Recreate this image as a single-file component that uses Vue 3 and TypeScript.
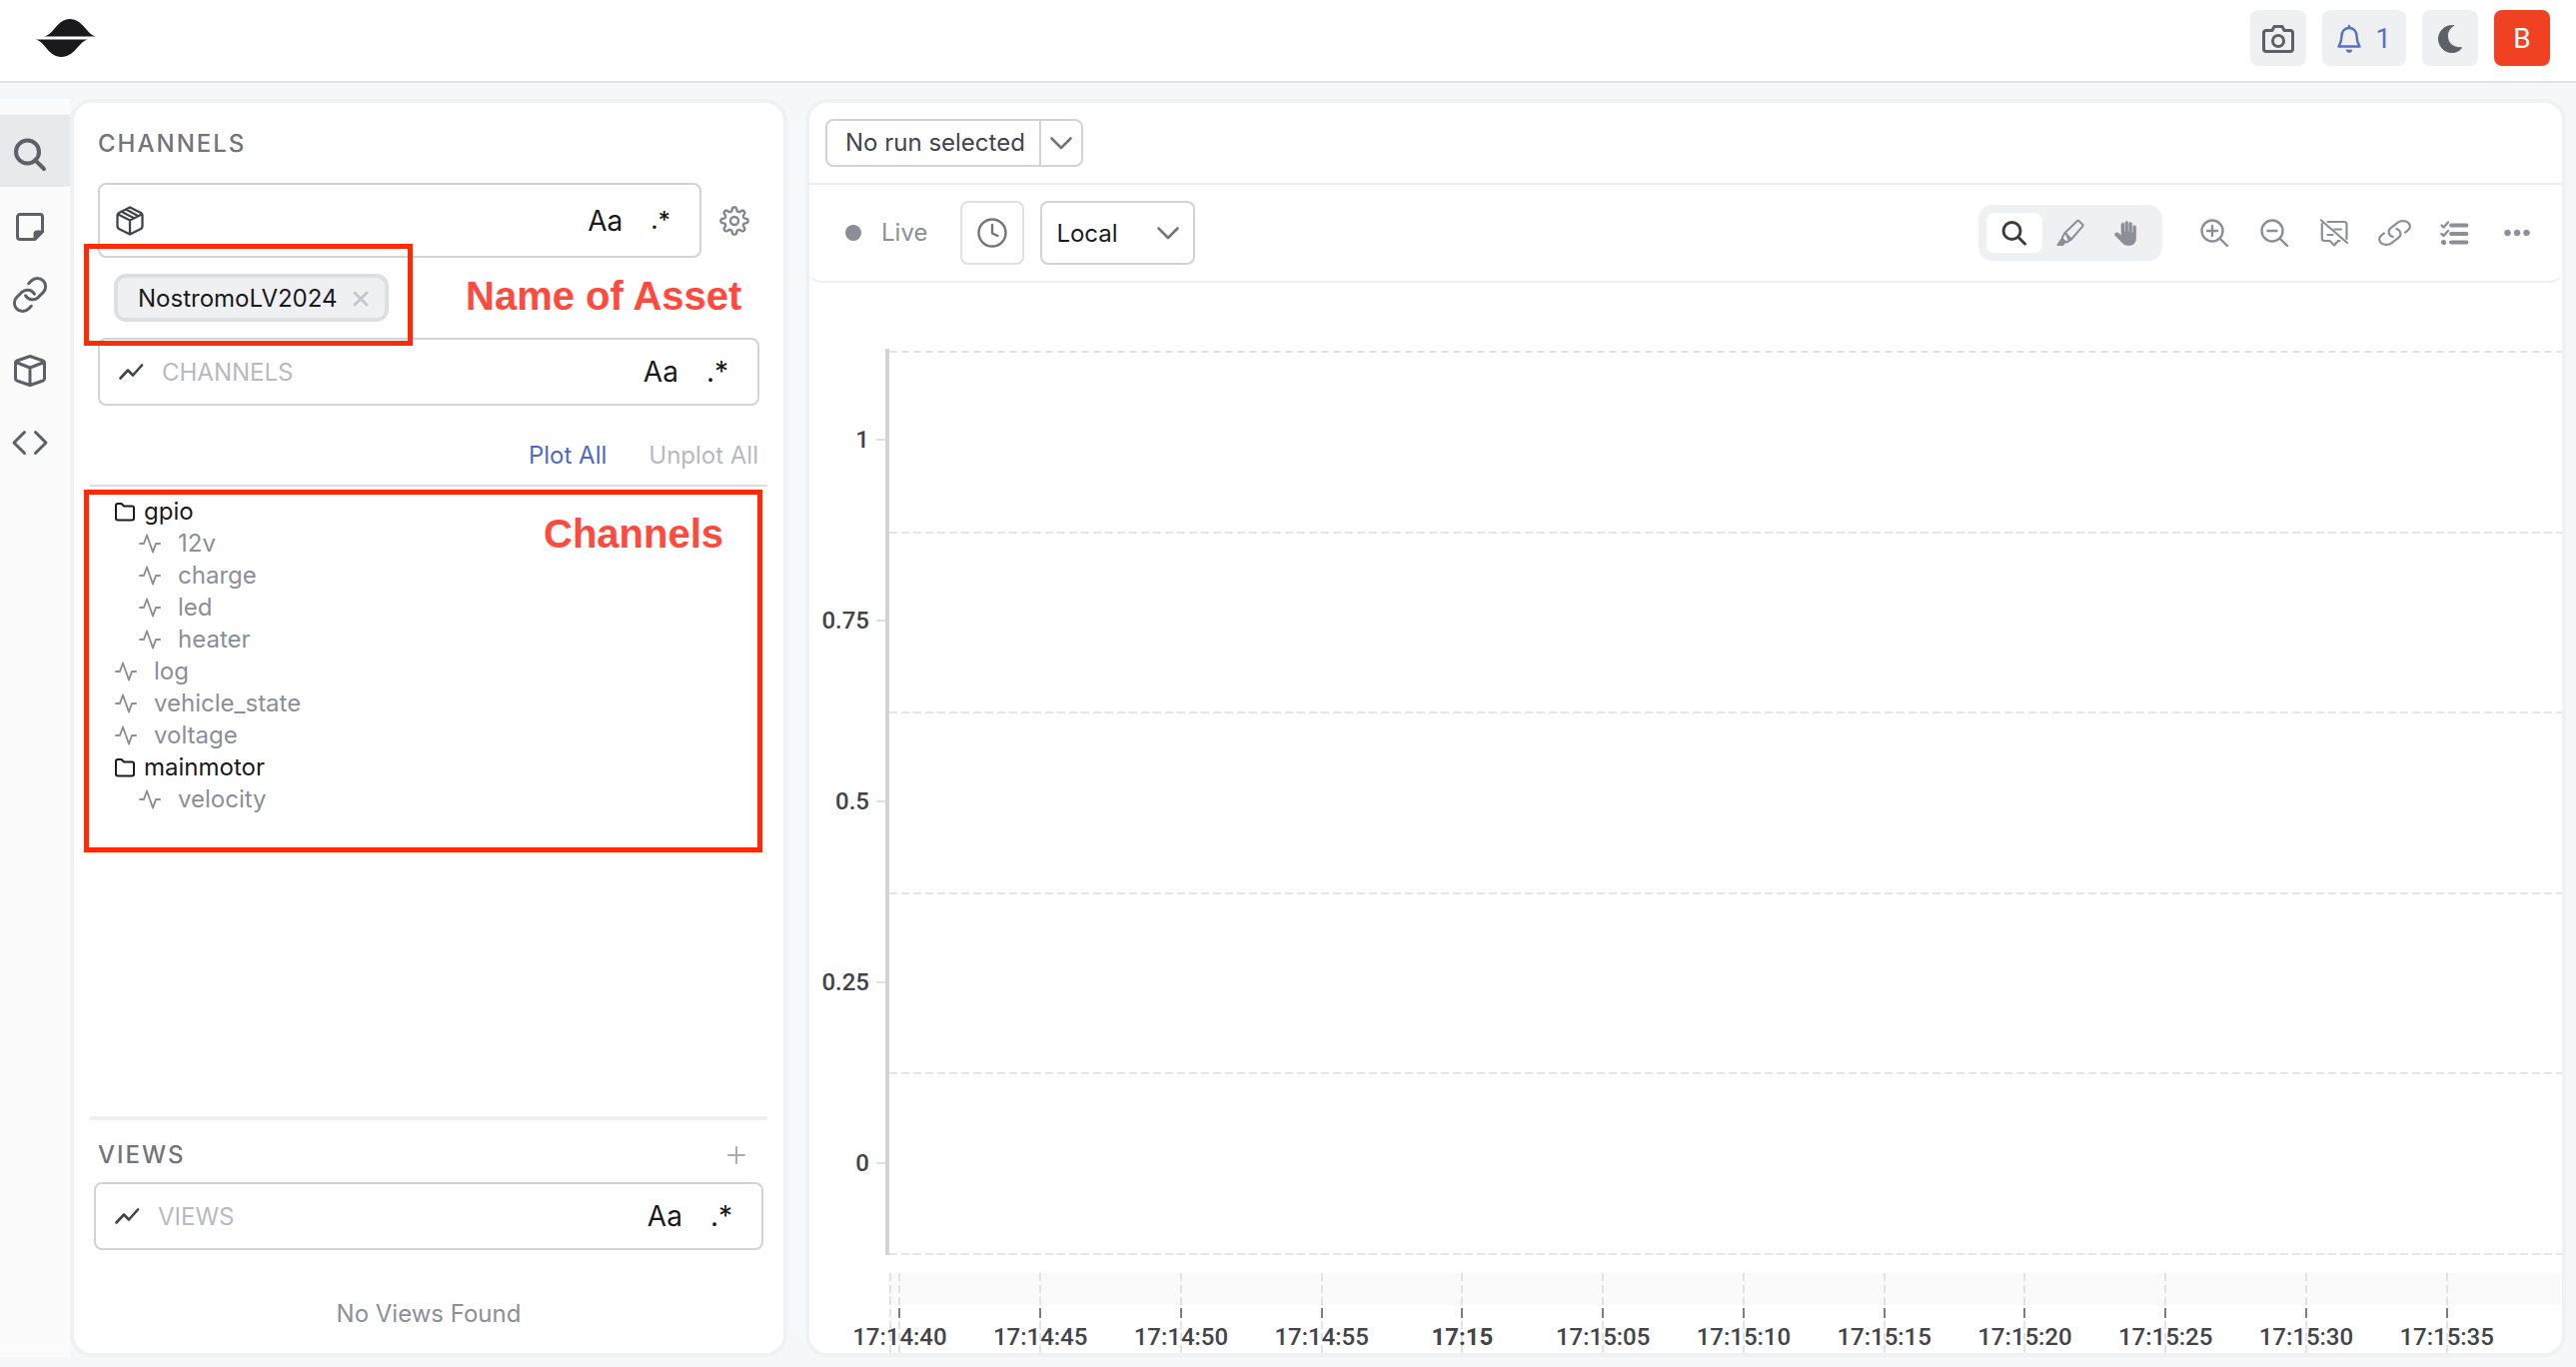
<script setup lang="ts">
import { h, ref } from 'vue'

interface Shape {
  d: string
  fill?: boolean
  w?: number
}
interface Glyph {
  w: number
  h: number
  stroke: number
  shapes: Shape[]
}

/* Outline of the eight-toothed settings wheel. */
function gearOutline(cx: number, cy: number): string {
  const points: string[] = []
  for (let i = 0; i < 144; i++) {
    const a = (i / 144) * Math.PI * 2
    const r = 11.7 + 2 * Math.tanh(1.8 * Math.cos(8 * a))
    points.push(`${(cx + r * Math.sin(a)).toFixed(2)} ${(cy - r * Math.cos(a)).toFixed(2)}`)
  }
  return `M${points.join('L')}Z`
}

const glyphs: Record<string, Glyph> = {
  search: { w: 32, h: 32, stroke: 4, shapes: [{ d: 'M25 13a11.5 11.5 0 1 1-23 0a11.5 11.5 0 0 1 23 0ZM21 21L30 30' }] },
  searchSmall: { w: 24, h: 24, stroke: 3, shapes: [{ d: 'M18 10a8.5 8.5 0 1 1-17 0a8.5 8.5 0 0 1 17 0ZM15.5 16L22.5 23' }] },
  note: {
    w: 28, h: 28, stroke: 3,
    shapes: [
      { d: 'M4 1.5H24A2.5 2.5 0 0 1 26.5 4V19L19 26.5H4A2.5 2.5 0 0 1 1.5 24V4A2.5 2.5 0 0 1 4 1.5Z' },
      { d: 'M19 26V21a2 2 0 0 1 2-2h5Z', fill: true }
    ]
  },
  link: {
    w: 24, h: 29, stroke: 2,
    shapes: [{ d: 'M9 12.5a5.5 5.5 0 0 0 8.5 1.2l3.300-3.300a5.5 5.5 0 0 0-7.800-7.800l-1.900 1.900M15 11.5a5.5 5.5 0 0 0-8.5-1.200l-3.300 3.300a5.5 5.5 0 0 0 7.800 7.800l1.900-1.900' }]
  },
  chain: {
    w: 33, h: 26, stroke: 2.2,
    shapes: [{ d: 'M18.4 8.95a7.11 5.49 0 0 1 1.96 8.84l-7.11 5.49a7.11 5.49 0 0 1-10.06-7.76l2.78-2.14m21.09-.76 2.78-2.14a7.11 5.49 0 0 0-10.06-7.76l-7.11 5.49a7.11 5.49 0 0 0 1.96 8.84' }]
  },
  cube: { w: 32, h: 32, stroke: 3, shapes: [{ d: 'M16 1.5L29 6Q30.5 6.6 30.5 8V24Q30.5 25.3 29 26L16 30.5L3 26Q1.5 25.3 1.5 24V8Q1.5 6.6 3 6ZM2 7.5L16 13L30 7.5M16 13V30' }] },
  package: {
    w: 28, h: 30, stroke: 2.3,
    shapes: [{ d: 'M14 1.5L25 7Q26.5 8 26.5 9.5V20.5Q26.5 22 25 23L14 28.5L3 23Q1.5 22 1.5 20.5V9.5Q1.5 8 3 7ZM2.2 8.5L14 14.5L25.8 8.5M14 14.5V28M6.500 6.300L18 12.200M10.500 3.700L22 10' }]
  },
  code: { w: 36, h: 24, stroke: 3, shapes: [{ d: 'M12.5 1.5L2 12L12.5 22.5M23.5 1.5L34 12L23.5 22.5' }] },
  camera: {
    w: 32, h: 28, stroke: 3,
    shapes: [{ d: 'M4 5.5H10L12 1.5H20L22 5.5H28Q30.5 5.5 30.5 8V24Q30.5 26.5 28 26.5H4Q1.5 26.5 1.5 24V8Q1.5 5.5 4 5.5ZM21.5 16a5.5 5.5 0 1 1-11 0a5.5 5.5 0 0 1 11 0Z' }]
  },
  bell: {
    w: 24, h: 28, stroke: 2.4,
    shapes: [{ d: 'M12 3C7 3 4.5 7 4.5 11C4.5 16 3.5 18 1.5 21.5H22.5C20.5 18 19.5 16 19.5 11C19.5 7 17 3 12 3ZM12 1V3' }, { d: 'M9 25H15Q14.5 27.5 12 27.5Q9.5 27.5 9 25Z', fill: true, w: 0.6 }]
  },
  moon: { w: 24, h: 28, stroke: 1, shapes: [{ d: 'M15.5 0.6C7 -0.2 0.5 6 0.5 14C0.5 21.5 6.5 27.5 13.5 27.5C18.5 27.5 22 25.5 23.5 22.7C15 23 9.5 18.5 9.5 11C9.5 6 12 3 15.5 0.6Z', fill: true }] },
  gear: { w: 30, h: 30, stroke: 2.4, shapes: [{ d: gearOutline(15, 15) }, { d: 'M19 15a4 4 0 1 1-8 0a4 4 0 0 1 8 0Z' }] },
  trend: { w: 24, h: 16, stroke: 2.6, shapes: [{ d: 'M1.5 14.5L9 6.5L14 11.5L23 1.5' }] },
  close: { w: 16, h: 16, stroke: 3, shapes: [{ d: 'M2 2L14 14M14 2L2 14' }] },
  plus: { w: 18, h: 18, stroke: 2, shapes: [{ d: 'M9 1V17M1 9H17' }] },
  folder: { w: 20, h: 19, stroke: 2, shapes: [{ d: 'M3 1H6.5L9 3.5H17Q19 3.5 19 5.5V15.5Q19 17.5 17 17.5H3Q1 17.5 1 15.5V3Q1 1 3 1Z' }] },
  pulse: { w: 22, h: 20, stroke: 1.9, shapes: [{ d: 'M1 10H5L8 1.5L14 18.5L17 10H21' }] },
  chevron: { w: 22, h: 13, stroke: 2.6, shapes: [{ d: 'M1.5 1.5L11 11L20.5 1.5' }] },
  clock: { w: 30, h: 30, stroke: 2.4, shapes: [{ d: 'M28.5 15a13.5 13.5 0 1 1-27 0a13.5 13.5 0 0 1 27 0ZM15 7V15.5L20.5 18' }] },
  marker: {
    w: 28, h: 28, stroke: 2,
    shapes: [{ d: 'M22.5 2L26.5 6Q27 6.5 26.5 7.2L15 20.5L8.5 14L21 2Q21.7 1.3 22.5 2ZM8.5 14L6 18.5V20.5L10 23.5L12 22.5L15 20.5M10 15L12.5 21' }, { d: 'M5.5 20L8.5 23L6.5 26H1.5Z', fill: true }]
  },
  hand: {
    w: 24, h: 25, stroke: 0.6,
    shapes: [{ d: 'M1 12.5Q2.5 11 4.5 12.5L7 15V3.5Q7 2 8.5 2Q10 2 10 3.5V11H11V1.8Q11 0.5 12.4 0.5Q13.8 0.5 13.8 1.8V11H14.8V2.8Q14.8 1.5 16.2 1.5Q17.6 1.5 17.6 2.8V12H18.8V6Q18.8 4.7 20.2 4.7Q21.6 4.7 21.6 6V17Q21.6 24.5 14.5 24.5Q10 24.5 8 22L0.8 14.5Q0 13.5 1 12.5Z', fill: true }]
  },
  zoomIn: { w: 28, h: 28, stroke: 2.4, shapes: [{ d: 'M22.5 12a10.5 10.5 0 1 1-21 0a10.5 10.5 0 0 1 21 0ZM19.5 19.5L27 27M12 7V17M7 12H17' }] },
  zoomOut: { w: 28, h: 28, stroke: 2.4, shapes: [{ d: 'M22.5 12a10.5 10.5 0 1 1-21 0a10.5 10.5 0 0 1 21 0ZM19.5 19.5L27 27M7.5 12H16.5' }] },
  annotate: {
    w: 28, h: 28, stroke: 2.2,
    shapes: [{ d: 'M1 1.5L27 24M7.5 3H24Q26.5 3 26.5 5.5V20M1.8 5V19.5Q1.8 22 4.5 22H9.5L14 26.5L18 22H19.5M14.5 10.5H21M7.5 16H12.5' }]
  },
  checklist: {
    w: 28, h: 25, stroke: 3,
    shapes: [
      { d: 'M11 4.5H26.5M11 13H26.5M11 21.5H26.5', w: 3.8 },
      { d: 'M1.5 4.5L3.5 6.5L8 1.5M1.5 13L3.5 15L8 10', w: 2.4 },
      { d: 'M5.5 21.5a2 2 0 1 1-4 0a2 2 0 0 1 4 0Z', fill: true, w: 1.2 }
    ]
  },
  dots: { w: 26, h: 8, stroke: 0.5, shapes: [{ d: 'M6.5 4a3 3 0 1 1-6 0a3 3 0 0 1 6 0ZM16 4a3 3 0 1 1-6 0a3 3 0 0 1 6 0ZM25.5 4a3 3 0 1 1-6 0a3 3 0 0 1 6 0Z', fill: true }] }
}

const Icon = (props: { name: string; size?: number }) => {
  const g = glyphs[props.name]
  const width = props.size ?? g.w
  return h(
    'svg',
    { width, height: (g.h * width) / g.w, viewBox: `0 0 ${g.w} ${g.h}`, 'aria-hidden': 'true', class: 'icon' },
    g.shapes.map((s) =>
      h('path', {
        d: s.d,
        fill: s.fill ? 'currentColor' : 'none',
        stroke: 'currentColor',
        'stroke-width': s.w ?? g.stroke,
        'stroke-linecap': 'round',
        'stroke-linejoin': 'round'
      })
    )
  )
}
Icon.props = ['name', 'size']

const railItems = [
  { icon: 'search', label: 'Search', size: 32 },
  { icon: 'note', label: 'Notes', size: 28 },
  { icon: 'link', label: 'Links', size: 36 },
  { icon: 'cube', label: 'Assets', size: 32 },
  { icon: 'code', label: 'Code', size: 36 }
]

const tree = [
  { name: 'gpio', folder: true, depth: 0 },
  { name: '12v', folder: false, depth: 1 },
  { name: 'charge', folder: false, depth: 1 },
  { name: 'led', folder: false, depth: 1 },
  { name: 'heater', folder: false, depth: 1 },
  { name: 'log', folder: false, depth: 0 },
  { name: 'vehicle_state', folder: false, depth: 0 },
  { name: 'voltage', folder: false, depth: 0 },
  { name: 'mainmotor', folder: true, depth: 0 },
  { name: 'velocity', folder: false, depth: 1 }
]

const chartTools = [
  { icon: 'zoomIn', label: 'Zoom in', size: 28 },
  { icon: 'zoomOut', label: 'Zoom out', size: 28 },
  { icon: 'annotate', label: 'Hide annotations', size: 28 },
  { icon: 'chain', label: 'Copy link', size: 33 },
  { icon: 'checklist', label: 'Checklist', size: 28 }
]

const yLabels = ['1', '0.75', '0.5', '0.25', '0']
const times = [
  '17:14:40', '17:14:45', '17:14:50', '17:14:55', '17:15', '17:15:05',
  '17:15:10', '17:15:15', '17:15:20', '17:15:25', '17:15:30', '17:15:35'
]
const xTicks = times.map((label, i) => ({ label, left: 0.68 + i * 8.403, major: label === '17:15' }))

const assetQuery = ref('')
const channelQuery = ref('')
const viewQuery = ref('')
const zone = ref('Local')
</script>

<template>
  <div class="app">
    <header class="topbar">
      <a class="logo" href="#" aria-label="Home">
        <svg width="62" height="38" viewBox="35 19 62 38" aria-hidden="true">
          <path d="M44 36.500C55 34 57 19 70 19S86 34 96 36.500Z" fill="#1a1a1c" />
          <path d="M35.500 39.500H88C78 42 75 57 61.500 57S46 42 35.500 39.500Z" fill="#1a1a1c" />
        </svg>
      </a>
      <div class="top-actions">
        <button class="top-btn" aria-label="Screenshot"><Icon name="camera" /></button>
        <button class="top-btn alerts" aria-label="Notifications"><Icon name="bell" /><span>1</span></button>
        <button class="top-btn" aria-label="Dark mode"><Icon name="moon" /></button>
        <button class="top-btn avatar">B</button>
      </div>
    </header>

    <div class="body">
      <nav class="rail">
        <button v-for="(item, i) in railItems" :key="item.icon" class="rail-btn" :class="{ active: i === 0 }" :aria-label="item.label">
          <Icon :name="item.icon" :size="item.size" />
        </button>
      </nav>

      <aside class="panel side">
        <h2 class="title channels-title">CHANNELS</h2>
        <div class="asset-row">
          <div class="field tall">
            <Icon name="package" />
            <input v-model="assetQuery" type="text" aria-label="Assets" />
            <button class="opt">Aa</button>
            <button class="opt strong">.*</button>
          </div>
          <button class="plain gear" aria-label="Settings"><Icon name="gear" /></button>
        </div>
        <div class="chips">
          <span class="chip">NostromoLV2024<button class="plain chip-x" aria-label="Remove"><Icon name="close" /></button></span>
        </div>
        <div class="field channel-field">
          <Icon name="trend" />
          <input v-model="channelQuery" type="text" placeholder="CHANNELS" aria-label="Channels" />
          <button class="opt">Aa</button>
          <button class="opt">.*</button>
        </div>
        <div class="plot-row">
          <button class="plain plot">Plot All</button>
          <button class="plain unplot" disabled>Unplot All</button>
        </div>
        <ul class="tree">
          <li v-for="node in tree" :key="node.name" class="node" :class="{ folder: node.folder, child: node.depth === 1 }">
            <Icon :name="node.folder ? 'folder' : 'pulse'" /><span>{{ node.name }}</span>
          </li>
        </ul>
        <section class="views">
          <div class="views-head">
            <h2 class="title">VIEWS</h2>
            <button class="plain" aria-label="Add view"><Icon name="plus" /></button>
          </div>
          <div class="field view-field">
            <Icon name="trend" />
            <input v-model="viewQuery" type="text" placeholder="VIEWS" aria-label="Views" />
            <button class="opt">Aa</button>
            <button class="opt">.*</button>
          </div>
          <p class="empty">No Views Found</p>
        </section>

        <div class="callout box-asset"></div>
        <div class="callout box-channels"></div>
        <strong class="callout-text text-asset">Name of Asset</strong>
        <strong class="callout-text text-channels">Channels</strong>
      </aside>

      <main class="panel main">
        <div class="run-bar">
          <div class="run">
            <button class="run-name">No run selected</button>
            <button class="run-open" aria-label="Choose run"><Icon name="chevron" /></button>
          </div>
        </div>
        <div class="toolbar">
          <button class="plain live"><i></i>Live</button>
          <button class="time-btn" aria-label="Time range"><Icon name="clock" /></button>
          <div class="zone">
            <select v-model="zone" aria-label="Time zone">
              <option>Local</option>
              <option>UTC</option>
            </select>
            <Icon name="chevron" />
          </div>
          <div class="modes">
            <button class="mode active" aria-label="Zoom"><Icon name="searchSmall" /></button>
            <button class="mode" aria-label="Highlight"><Icon name="marker" /></button>
            <button class="mode" aria-label="Pan"><Icon name="hand" /></button>
          </div>
          <div class="tools">
            <button v-for="tool in chartTools" :key="tool.icon" class="plain tool" :aria-label="tool.label">
              <Icon :name="tool.icon" :size="tool.size" />
            </button>
            <button class="plain tool more" aria-label="More"><Icon name="dots" /></button>
          </div>
        </div>

        <div class="chart">
          <div class="y-axis">
            <div v-for="label in yLabels" :key="label" class="y-label">{{ label }}</div>
          </div>
          <div class="plot-area">
            <div v-for="n in 6" :key="n" class="grid-line"></div>
          </div>
          <div class="x-axis">
            <div class="x-band"></div>
            <div class="x-grid origin"></div>
            <div v-for="tick in xTicks" :key="tick.label" class="x-tick" :class="{ major: tick.major }" :style="{ left: tick.left + '%' }">
              <span class="x-grid"></span>
              <span class="x-mark"></span>
              <span class="x-label">{{ tick.label }}</span>
            </div>
          </div>
        </div>
      </main>
    </div>
  </div>
</template>

<style>
body {
  margin: 0;
  background: #f6f7f9;
}
</style>

<style scoped>
.app {
  min-height: 100vh;
  display: flex;
  flex-direction: column;
  background: #f6f7f9;
  font: 400 24px/32px Inter, sans-serif;
  color: #1a1a1c;
}
.app *,
.app *::before {
  box-sizing: border-box;
}
button,
input,
select {
  font: inherit;
  color: inherit;
  margin: 0;
  padding: 0;
  border: 0;
  background: none;
  min-width: 0;
}
.icon {
  display: block;
  flex: none;
  overflow: visible;
}
.plain {
  display: flex;
  align-items: center;
}

.topbar {
  display: flex;
  justify-content: space-between;
  align-items: flex-start;
  height: 83px;
  padding: 10px 26px 0 35px;
  background: #fff;
  border-bottom: 2px solid #e0e1e4;
}
.logo {
  padding-top: 9px;
}
.logo svg {
  display: block;
}
.top-actions {
  display: flex;
  gap: 16px;
}
.top-btn {
  display: flex;
  align-items: center;
  justify-content: center;
  width: 56px;
  height: 56px;
  padding-top: 2px;
  border-radius: 8px;
  background: #eff0f2;
  color: #5e6067;
  font: 400 28px/36px Roboto, sans-serif;
}
.alerts {
  width: 84px;
  gap: 14px;
  color: #5670c8;
}
.avatar {
  background: #f04122;
  color: #fff;
}

.body {
  flex: 1;
  display: flex;
  padding: 16px 10px 10px 0;
}
.rail {
  width: 70px;
  flex: none;
  padding-top: 16px;
  background: #fbfbfc;
}
.rail-btn {
  display: flex;
  align-items: center;
  justify-content: center;
  width: 70px;
  height: 72px;
  padding: 8px 10px 0 0;
  color: #5e6067;
}
.rail-btn.active {
  background: #e8e9eb;
}
.panel {
  display: flex;
  flex-direction: column;
  background: #fff;
  border: 4px solid #f0f1f3;
  border-radius: 22px;
}
.side {
  position: relative;
  flex: 0 0 718px;
  padding: 25px 16px 0;
}
.title {
  margin: 0;
  font: 500 24px/32px Inter, sans-serif;
  letter-spacing: 2px;
  color: #73757b;
}
.channels-title {
  padding-left: 8px;
}
.asset-row {
  display: flex;
  align-items: center;
  gap: 18px;
  padding: 23px 18px 0 8px;
}
.field {
  display: flex;
  align-items: center;
  height: 68px;
  padding: 0 29px 0 19px;
  border: 2px solid #d2d2d9;
  border-radius: 8px;
  color: #434449;
}
.field input {
  flex: 1;
  padding: 2px 0 0 19px;
  outline: none;
}
.field input::placeholder {
  color: #b8b9c2;
  opacity: 1;
}
.tall {
  flex: 1;
  height: 75px;
  padding: 0 29px 0 16px;
}
.opt {
  margin-left: 28px;
  font-size: 28px;
  color: #1a1a1c;
}
.strong {
  font-size: 24px;
  font-weight: 500;
}
.gear {
  color: #85878d;
}
.chips {
  padding: 16px 0 16px 24px;
  display: flex;
}
.chip {
  display: flex;
  align-items: center;
  gap: 16px;
  height: 48px;
  padding: 2px 16px 0 20px;
  border: 4px solid #dedfe1;
  border-radius: 12px;
  background: #eff0f2;
}
.chip-x {
  color: #c6c8cd;
}
.channel-field {
  margin: 0 8px;
}
.plot-row {
  display: flex;
  justify-content: flex-end;
  gap: 42px;
  height: 81px;
  padding: 34px 9px 0 0;
  align-items: flex-start;
  border-bottom: 2px solid #dcdde0;
}
.plot {
  color: #5068c4;
}
.unplot {
  color: #b8b9c2;
}
.tree {
  list-style: none;
  margin: 0;
  padding: 9px 0 0 25px;
  flex: 1;
}
.node {
  display: flex;
  align-items: center;
  gap: 17px;
  height: 32px;
  color: #8c8f98;
}
.node.folder {
  gap: 9px;
  color: #1a1a1c;
}
.node.child {
  padding-left: 24px;
}
.views {
  border-top: 4px solid #eff0f2;
  padding: 19px 4px 15px;
}
.views-head {
  display: flex;
  align-items: center;
  justify-content: space-between;
  padding: 0 18px 0 4px;
  color: #a9abb2;
}
.view-field {
  margin-top: 11px;
}
.empty {
  margin: 32px 0 0;
  padding: 16px 0 0;
  height: 56px;
  text-align: center;
  color: #8c8f98;
}

.callout {
  position: absolute;
  border: 5px solid #ff2a08;
  pointer-events: none;
}
.box-asset {
  left: 10px;
  top: 141px;
  width: 329px;
  height: 102px;
}
.box-channels {
  left: 10px;
  top: 387px;
  width: 679px;
  height: 363px;
}
.callout-text {
  position: absolute;
  font: 700 40px/48px "Liberation Sans", sans-serif;
  color: #ff4a40;
}
.text-asset {
  left: 392px;
  top: 169px;
}
.text-channels {
  left: 470px;
  top: 407px;
}

.main {
  flex: 1;
  min-width: 0;
  margin-left: 18px;
}
.run-bar {
  height: 82px;
  padding: 16px;
  border-bottom: 2px solid #eeeff1;
}
.run {
  display: inline-flex;
  height: 48px;
  border: 2px solid #d2d2d9;
  border-radius: 8px;
  color: #434449;
}
.run-name {
  padding: 0 14px 0 18px;
  border-right: 2px solid #d2d2d9;
}
.run-open {
  padding: 0 9px;
  color: #73757b;
}
.toolbar {
  display: flex;
  align-items: center;
  height: 98px;
  padding: 0 32px 0 36px;
  border-bottom: 2px solid #eeeff1;
  border-radius: 0 0 12px 12px;
}
.live {
  gap: 20px;
  color: #8c8f98;
}
.live i {
  width: 16px;
  height: 16px;
  border-radius: 50%;
  background: #8b8e97;
}
.time-btn {
  display: flex;
  align-items: center;
  justify-content: center;
  width: 64px;
  height: 64px;
  margin: 0 16px 0 33px;
  border: 2px solid #dfe0e3;
  border-radius: 8px;
  color: #73757b;
}
.zone {
  display: grid;
  align-items: center;
  width: 155px;
  height: 64px;
  border: 2px solid #d2d2d9;
  border-radius: 8px;
  color: #73757b;
}
.zone > * {
  grid-area: 1 / 1;
}
.zone select {
  appearance: none;
  width: 100%;
  height: 60px;
  padding: 2px 0 0 14px;
  color: #1a1a1c;
}
.zone .icon {
  justify-self: end;
  margin-right: 14px;
  pointer-events: none;
}
.modes {
  display: flex;
  align-items: center;
  margin-left: auto;
  height: 56px;
  padding: 0 8px;
  border-radius: 14px;
  background: #eff0f2;
  color: #8c8f98;
}
.mode {
  display: flex;
  align-items: center;
  justify-content: center;
  width: 56px;
  height: 40px;
  border-radius: 8px;
}
.mode.active {
  background: #fff;
  color: #3c3d41;
}
.tools {
  display: flex;
  margin-left: 22px;
  color: #8c8f98;
}
.tool {
  justify-content: center;
  width: 60px;
  height: 40px;
}
.more {
  justify-content: flex-end;
  width: 46px;
}

.chart {
  flex: 1;
  display: grid;
  grid-template: minmax(400px, 1fr) 98px / 76px minmax(0, 1fr);
  padding-top: 66px;
  font-family: Roboto, sans-serif;
  color: #434449;
}
.y-axis {
  display: flex;
  flex-direction: column;
  padding-bottom: 1px;
}
.y-label {
  flex: 1;
  display: flex;
  align-items: center;
  justify-content: flex-end;
  gap: 7px;
  font-weight: 500;
}
.y-label::after {
  content: "";
  width: 9px;
  height: 2px;
  background: #dfe0e4;
}
.plot-area {
  display: flex;
  flex-direction: column;
  justify-content: space-between;
  padding-top: 2px;
  border-left: 4px solid #d3d4db;
}
.grid-line {
  height: 2px;
  background: repeating-linear-gradient(90deg, #e4e5e7 0 8px, transparent 8px 12px);
}
.x-axis {
  grid-column: 2;
  position: relative;
  margin-left: 3px;
  padding-top: 18px;
}
.x-band {
  height: 32px;
  background: #fafafb;
}
.x-grid {
  width: 2px;
  height: 80px;
  background: repeating-linear-gradient(180deg, #e2e3e6 0 8px, transparent 8px 12px);
}
.origin {
  position: absolute;
  left: 1px;
  top: 18px;
}
.x-tick {
  position: absolute;
  top: 18px;
  width: 120px;
  height: 80px;
  margin-left: -60px;
  display: grid;
  grid-template-rows: 35px 10px 35px;
  justify-items: center;
}
.x-tick .x-grid {
  grid-area: 1 / 1 / 4 / 2;
}
.x-mark {
  grid-area: 2 / 1;
  width: 2px;
  background: #7b7d85;
}
.x-label {
  grid-area: 3 / 1;
  padding-top: 3px;
  font-weight: 500;
}
.major .x-label {
  font-weight: 700;
}
</style>
